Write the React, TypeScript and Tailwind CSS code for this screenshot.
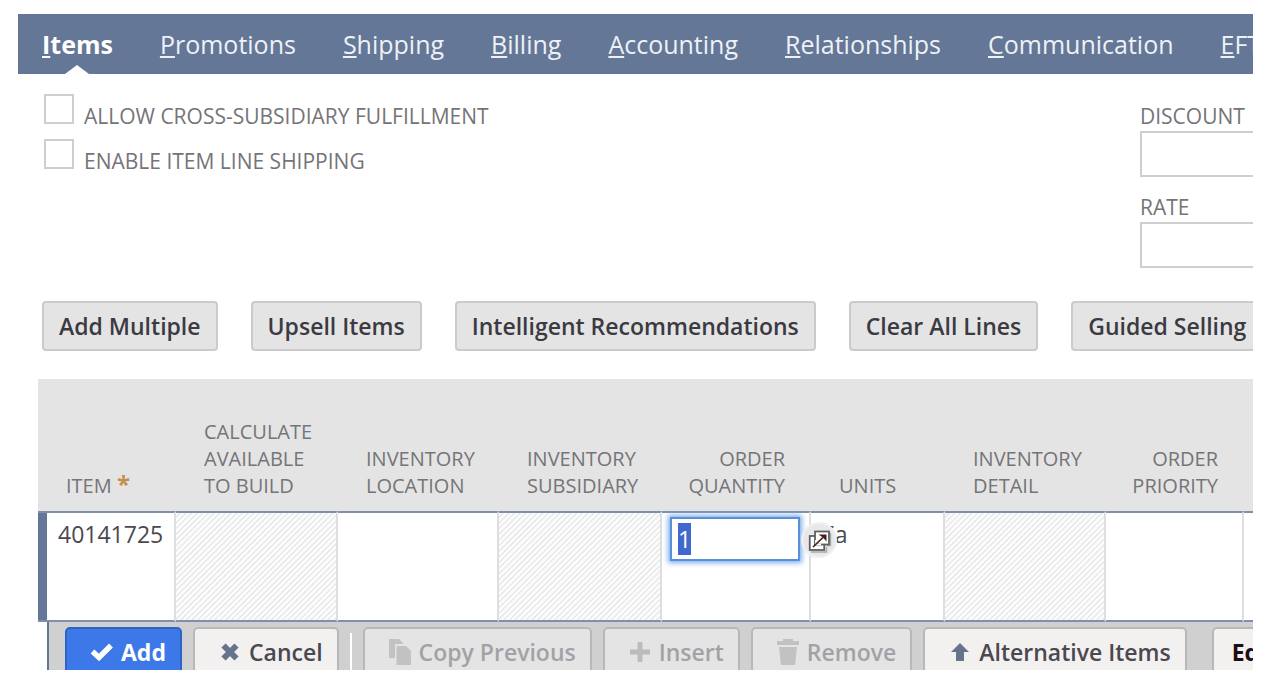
import { useEffect, useRef } from "react";
import type { ReactNode } from "react";

const tabs = ["Items", "Promotions", "Shipping", "Billing", "Accounting", "Relationships", "Communication", "EFT"];

const lineActions = ["Add Multiple", "Upsell Items", "Intelligent Recommendations", "Clear All Lines", "Guided Selling"];

function CheckIcon() {
  return (
    <svg viewBox="0 0 24 20" className="h-5 w-6 shrink-0" aria-hidden="true">
      <path d="M2.5 9.5 L9 15.5 L21 3.5" fill="none" stroke="#fff" strokeWidth="5.4" />
    </svg>
  );
}

function CrossIcon() {
  return (
    <svg viewBox="0 0 18 18" className="size-[18px] shrink-0" aria-hidden="true">
      <path d="M2.5 2.5 L15.5 15.5 M15.5 2.5 L2.5 15.5" stroke="#65748c" strokeWidth="6" />
    </svg>
  );
}

function CopyIcon() {
  return (
    <svg viewBox="0 0 22 26" className="h-[26px] w-[22px] shrink-0" aria-hidden="true">
      <path d="M0 0 H10 L15 5 H6 V19 H0 Z" fill="#c2c2c2" />
      <path d="M7.5 7 H17 L22 12 V26 H7.5 Z" fill="#c2c2c2" />
    </svg>
  );
}

function PlusIcon() {
  return (
    <svg viewBox="0 0 20 20" className="size-5 shrink-0" aria-hidden="true">
      <path d="M7.5 0 H12.5 V7.5 H20 V12.5 H12.5 V20 H7.5 V12.5 H0 V7.5 H7.5 Z" fill="#bcbcbc" />
    </svg>
  );
}

function TrashIcon() {
  return (
    <svg viewBox="0 0 22 26" className="h-[26px] w-[22px] shrink-0" aria-hidden="true">
      <path d="M6 0 H16 V2 H22 V6 H0 V2 H6 Z M2 8 H20 L18 26 H4 Z" fill="#c2c2c2" />
    </svg>
  );
}

function UpIcon() {
  return (
    <svg viewBox="0 0 18 18" className="size-[18px] shrink-0" aria-hidden="true">
      <path d="M9 0 L18 9 H13 V18 H5 V9 H0 Z" fill="#65748c" />
    </svg>
  );
}

function PopOutIcon() {
  return (
    <svg viewBox="0 0 36 36" className="size-9" aria-hidden="true">
      <circle cx="18" cy="18" r="17" fill="#e8e8e8" stroke="#f0f0f0" strokeWidth="2" />
      <path d="M10 30 H25.5 V25 M29.5 11 V23.5 H26" fill="none" stroke="#aaa" strokeWidth="1.5" />
      <rect x="8.75" y="14" width="14.5" height="14" fill="#fff" stroke="#5c6064" strokeWidth="1.8" />
      <rect x="14" y="9.5" width="14" height="13" fill="#fff" stroke="#5c6064" strokeWidth="1.8" />
      <path d="M14.9 18 V21.6 H20 V23 H14 V18 Z" fill="#fff" />
      <path d="M12 25 L23 14.5" fill="none" stroke="#4a1d1a" strokeWidth="1.7" />
      <path d="M17.5 12.5 H25.5 V19.5 L22 15.5 Z" fill="#4a1d1a" />
    </svg>
  );
}

function Check({ id, label }: { id: string; label: string }) {
  return (
    <div className="flex h-[45px] items-start gap-[10px]">
      <input id={id} type="checkbox" className="size-[30px] shrink-0 appearance-none border-2 border-[#cfcfcf] bg-white" />
      <label htmlFor={id} className="pt-[7px] text-[21px] leading-[30px]">
        {label}
      </label>
    </div>
  );
}

function Field({ id, label }: { id: string; label: string }) {
  return (
    <div className="flex h-[91px] flex-col">
      <label htmlFor={id} className="text-[21px] leading-[30px]">
        {label}
      </label>
      <input id={id} type="text" className="h-[46px] w-60 border-2 border-[#cfcfcf] bg-white px-2 text-[23px]" />
    </div>
  );
}

type Tone = "primary" | "normal" | "disabled";

const tones: Record<Tone, string> = {
  primary: "border-[#2c63c4] bg-[#3c78e7] font-bold text-white",
  normal: "border-[#b8b8b8] bg-[#f2f1f0] font-semibold text-[#4a4850]",
  disabled: "border-[#b8b8b8] bg-[#e4e4e4] font-semibold text-[#a2a2a6]",
};

function RowButton({ tone, icon, children }: { tone: Tone; icon: ReactNode; children: ReactNode }) {
  return (
    <button
      type="button"
      disabled={tone === "disabled"}
      className={`flex h-[50px] shrink-0 items-center gap-2 rounded-t-[5px] border-2 pr-[14px] pl-6 text-[23px] whitespace-nowrap ${tones[tone]}`}
    >
      <span className="flex w-[22px] justify-center">{icon}</span>
      {children}
    </button>
  );
}

const hatch = "border-r-2 border-[#dedede] bg-[repeating-linear-gradient(135deg,#fcfcfc_0px,#fcfcfc_2px,#e0e0e0_3px,#fcfcfc_4px)]";
const plain = "border-r-2 border-[#dedede] p-0 align-top";
const head = "pr-5 pb-3 pl-7 text-left align-bottom font-normal";
const headRight = "pr-[26px] pb-3 text-right align-bottom font-normal";

export default function App() {
  const quantity = useRef<HTMLInputElement>(null);

  useEffect(() => {
    quantity.current?.focus();
    quantity.current?.select();
  }, []);

  return (
    <div className="overflow-hidden bg-white pt-[14px] pr-[21px] pb-6 pl-[18px] font-['Open_Sans','Noto_Sans',sans-serif] text-[#757478]">
      <div className="overflow-hidden">
        <nav className="flex h-[60px] gap-[47px] bg-[#657797] pl-6 text-[25px] leading-[60px] whitespace-nowrap text-[#eef1f6]">
          {tabs.map((tab, i) => (
            <a
              key={tab}
              href={`#${tab.toLowerCase()}`}
              className={i === 0 ? "relative shrink-0 font-bold text-white" : "shrink-0"}
            >
              <span className="underline decoration-2 underline-offset-2">{tab[0]}</span>
              {tab.slice(1)}
              {i === 0 && (
                <svg viewBox="0 0 24 9" className="absolute inset-x-0 bottom-0 mx-auto h-[9px] w-6" aria-hidden="true">
                  <path d="M0 9 L12 0 L24 9 Z" fill="#fff" />
                </svg>
              )}
            </a>
          ))}
        </nav>

        <div className="flex h-[227px] justify-between pt-5 pl-[26px]">
          <div>
            <Check id="cross" label="ALLOW CROSS-SUBSIDIARY FULFILLMENT" />
            <Check id="lineship" label="ENABLE ITEM LINE SHIPPING" />
          </div>
          <div className="w-[113px] shrink-0 overflow-hidden pt-[7px]">
            <Field id="discount" label="DISCOUNT" />
            <Field id="rate" label="RATE" />
          </div>
        </div>

        <div className="flex gap-[33px] pl-6">
          {lineActions.map((name) => (
            <button
              key={name}
              type="button"
              className="h-[50px] shrink-0 rounded-[4px] border-2 border-[#cbcbcb] bg-[#e4e4e4] px-[15px] text-[23px] font-semibold whitespace-nowrap text-[#3b3a42]"
            >
              {name}
            </button>
          ))}
        </div>

        <div className="mt-7 ml-5 overflow-hidden">
          <table className="w-full table-fixed border-separate border-spacing-0">
            <colgroup>
              <col className="w-[9px]" />
              <col className="w-[129px]" />
              <col className="w-[162px]" />
              <col className="w-[161px]" />
              <col className="w-[163px]" />
              <col className="w-[149px]" />
              <col className="w-[134px]" />
              <col className="w-[161px]" />
              <col className="w-[138px]" />
              <col />
            </colgroup>
            <thead className="bg-[#e4e4e4] text-[20px] leading-[27px]">
              <tr className="h-[132px]">
                <th colSpan={2} className={head}>
                  ITEM <span className="text-[24px] leading-none font-bold text-[#c39048]">*</span>
                </th>
                <th className={head}>CALCULATE AVAILABLE TO BUILD</th>
                <th className={head}>INVENTORY LOCATION</th>
                <th className={head}>INVENTORY SUBSIDIARY</th>
                <th className={headRight}>ORDER QUANTITY</th>
                <th className={head}>UNITS</th>
                <th className={head}>INVENTORY DETAIL</th>
                <th className={headRight}>ORDER PRIORITY</th>
                <th />
              </tr>
            </thead>
            <tbody className="text-[23px] leading-[30px] text-[#4a4850] [&_td]:border-y-2 [&_td]:border-y-[#8090ab]">
              <tr className="h-[111px]">
                <td className="bg-[#657797]" />
                <td className={plain}>
                  <div className="pt-[6px] pl-[11px]">40141725</div>
                </td>
                <td className={hatch} />
                <td className={plain} />
                <td className={hatch} />
                <td className={plain}>
                  <div className="relative pt-1 pl-2">
                    <input
                      ref={quantity}
                      type="text"
                      aria-label="Order quantity"
                      defaultValue="1"
                      className="block h-[44px] w-[130px] border-2 border-[#5a8fdc] bg-white px-[6px] text-[23px] leading-[30px] shadow-[0_0_5px_2px_#7fb0ec] outline-none selection:bg-[#4169cd] selection:text-white"
                    />
                    <button type="button" aria-label="Open quantity" className="absolute top-[9px] -right-7 z-10">
                      <PopOutIcon />
                    </button>
                  </div>
                </td>
                <td className={plain}>
                  <div className="pt-[6px] pl-[11px]">Ea</div>
                </td>
                <td className={hatch} />
                <td className={plain} />
                <td />
              </tr>
            </tbody>
          </table>

          <div className="ml-[9px] flex h-12 items-start gap-[11px] overflow-hidden border-l-2 border-[#657797] bg-[#d0d0d0] pt-[5px] pl-4">
            <RowButton tone="primary" icon={<CheckIcon />}>Add</RowButton>
            <RowButton tone="normal" icon={<CrossIcon />}>Cancel</RowButton>
            <div className="mt-[6px] h-12 w-[2px] shrink-0 bg-white" />
            <RowButton tone="disabled" icon={<CopyIcon />}>Copy Previous</RowButton>
            <RowButton tone="disabled" icon={<PlusIcon />}>Insert</RowButton>
            <RowButton tone="disabled" icon={<TrashIcon />}>Remove</RowButton>
            <RowButton tone="normal" icon={<UpIcon />}>Alternative Items</RowButton>
            <button
              type="button"
              className="ml-[14px] h-[50px] shrink-0 rounded-t-[5px] border-2 border-[#b8b8b8] bg-[#f2f1f0] px-[18px] text-[23px] font-bold text-[#1c0d16]"
            >
              Edit
            </button>
          </div>
        </div>
      </div>
    </div>
  );
}
